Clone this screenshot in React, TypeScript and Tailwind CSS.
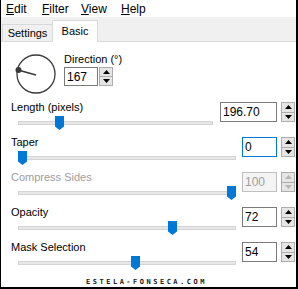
import React from "react";

type Row = {
  label: string;
  value: string;
  thumb: number; // thumb left offset from track start
  trackW: number;
  boxW: number;
  disabled?: boolean;
  focused?: boolean;
};

const rows: Row[] = [
  { label: "Length (pixels)", value: "196.70", thumb: 37, trackW: 195, boxW: 57 },
  { label: "Taper", value: "0", thumb: 0, trackW: 218, boxW: 35, focused: true },
  { label: "Compress Sides", value: "100", thumb: 209, trackW: 218, boxW: 35, disabled: true },
  { label: "Opacity", value: "72", thumb: 150, trackW: 218, boxW: 35 },
  { label: "Mask Selection", value: "54", thumb: 113, trackW: 218, boxW: 35 },
];

function SpinButtons({ disabled, h = 20 }: { disabled?: boolean; h?: number }) {
  const arrow = disabled ? "#b5b5b5" : "#000";
  return (
    <div className="flex flex-col w-[14px]" style={{ height: h }}>
      <div className="flex-1 flex items-center justify-center bg-[#e5e5e5] border border-[#adadad]">
        <svg width="7" height="4" viewBox="0 0 7 4">
          <polygon points="3.5,0 7,4 0,4" fill={arrow} />
        </svg>
      </div>
      <div className="flex-1 flex items-center justify-center bg-[#e5e5e5] border border-t-0 border-[#adadad]">
        <svg width="7" height="4" viewBox="0 0 7 4">
          <polygon points="0,0 7,0 3.5,4" fill={arrow} />
        </svg>
      </div>
    </div>
  );
}

function NumberBox({ value, width, disabled, focused, h = 20 }: { value: string; width: number; disabled?: boolean; focused?: boolean; h?: number }) {
  const border = focused ? "border-[#0078d7]" : disabled ? "border-[#bfbfbf]" : "border-[#7a7a7a]";
  return (
    <div
      className={`flex items-center border ${border} ${disabled ? "bg-[#f4f4f4] text-[#9d9d9d]" : "bg-white text-black"} text-[12px] leading-none pl-[2px]`}
      style={{ width, height: h }}
    >
      {value}
    </div>
  );
}

function Thumb() {
  return (
    <svg width="9" height="14" viewBox="0 0 9 14" className="block">
      <polygon points="0,0 9,0 9,10.5 4.5,14 0,10.5" fill="#0078d7" />
    </svg>
  );
}

function SliderRow({ row }: { row: Row }) {
  return (
    <div className="flex h-[35px] justify-between pr-[1px]">
      <div className="flex flex-col pl-[10px]">
        <span className={`text-[11px] leading-[13px] -mt-[1px] ${row.disabled ? "text-[#9d9d9d]" : "text-black"}`}>
          {row.label}
        </span>
        <div className="relative h-[16px] ml-[7px]" style={{ width: row.trackW }}>
          <div className="absolute left-0 right-0 top-[7px] h-[4px] bg-[#e7e7e7] border border-[#d4d4d4]" />
          <div className="absolute top-[2px]" style={{ left: row.thumb }}>
            <Thumb />
          </div>
        </div>
      </div>
      <div className="flex gap-[4px]">
        <NumberBox value={row.value} width={row.boxW} disabled={row.disabled} focused={row.focused} />
        <SpinButtons disabled={row.disabled} />
      </div>
    </div>
  );
}

export default function App() {
  return (
    <div
      className="w-[298px] h-[289px] bg-white border-l border-r-2 border-b-2 border-black overflow-hidden"
      style={{ fontFamily: '"Liberation Sans", Arial, sans-serif' }}
    >
      {/* menu bar */}
      <div className="h-[17px] flex items-center pl-[5px] text-[12px] text-black">
        <span className="w-[36px]"><span className="underline">E</span>dit</span>
        <span className="w-[39px]"><span className="underline">F</span>ilter</span>
        <span className="w-[40px]"><span className="underline">V</span>iew</span>
        <span><span className="underline">H</span>elp</span>
      </div>

      {/* tabs */}
      <div className="h-[25px] bg-[#f0f0f0] border-b border-[#d9d9d9] flex items-end pl-[1px]">
        <div className="w-[50px] h-[18px] border-t border-l border-[#d9d9d9] flex items-center justify-center text-[11px] text-black -mb-px">
          Settings
        </div>
        <div className="w-[46px] h-[22px] bg-white border-t border-l border-r border-[#d9d9d9] flex items-center justify-center text-[11px] text-black -mb-px pb-[1px]">
          Basic
        </div>
      </div>

      {/* direction */}
      <div className="h-[60px] flex pt-[11px] pl-[14px]">
        <svg width="42" height="42" viewBox="0 0 42 42">
          <circle cx="21" cy="21" r="19" fill="none" stroke="#3a3a3a" strokeWidth="1.3" />
          <line x1="3" y1="17" x2="21" y2="22" stroke="#3a3a3a" strokeWidth="1.8" />
          <circle cx="3.5" cy="17" r="3" fill="#3a3a3a" />
        </svg>
        <div className="flex flex-col ml-[7px]">
          <span className="text-[11px] leading-[13px] text-black">Direction (°)</span>
          <div className="flex gap-[1px] mt-[1px]">
            <NumberBox value="167" width={34} h={19} />
            <SpinButtons h={19} />
          </div>
        </div>
      </div>

      {/* sliders */}
      {rows.map((r) => (
        <SliderRow key={r.label} row={r} />
      ))}

      <div
        className="text-center text-[7px] leading-[8px] tracking-[2.5px] font-bold text-[#1a1a1a] mt-[1px] pr-[4px]"
        style={{ fontFamily: '"DejaVu Sans Mono", monospace' }}
      >
        ESTELA-FONSECA.COM
      </div>
    </div>
  );
}
